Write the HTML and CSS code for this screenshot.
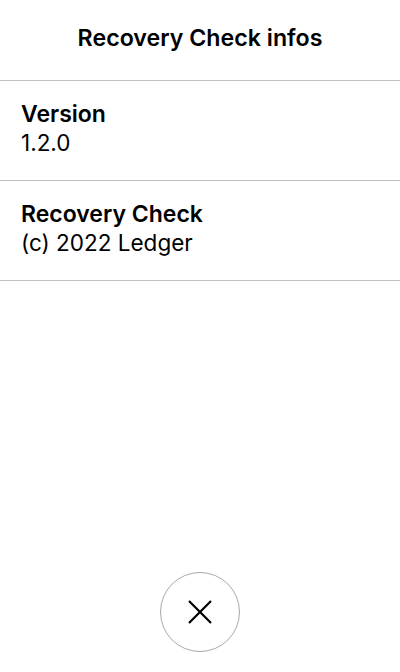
FILE: index.html
```html
<!DOCTYPE html>
<html>
<head>
<meta charset="utf-8">
<link rel="stylesheet" href="styles.css">
</head>
<body>
<div class="screen">
  <header class="title">Recovery Check infos</header>
  <div class="item">
    <div class="label">Version</div>
    <div class="value">1.2.0</div>
  </div>
  <div class="item">
    <div class="label">Recovery Check</div>
    <div class="value">(c) 2022 Ledger</div>
  </div>
  <div class="spacer"></div>
  <div class="footer">
    <button class="close" aria-label="Close">
      <svg width="24" height="24" viewBox="0 0 24 24"><path d="M1 1L23 23M23 1L1 23" stroke="#000" stroke-width="2.2" fill="none"/></svg>
    </button>
  </div>
</div>
</body>
</html>
```
FILE: styles.css
```css
html, body { margin: 0; padding: 0; background: #fff; }
.screen {
  width: 400px; height: 672px; display: flex; flex-direction: column;
  font-family: Inter, "Noto Sans", sans-serif; color: #000;
}
.title {
  height: 81px; box-sizing: border-box; border-bottom: 1px solid #c0c0c0;
  display: flex; align-items: center; justify-content: center;
  font-size: 23.2px; font-weight: 600; padding-bottom: 5px;
}
.item {
  height: 100px; box-sizing: border-box; border-bottom: 1px solid #c0c0c0;
  padding: 19px 21px 0;
}
.label { font-size: 23px; font-weight: 600; line-height: 28px; }
.value { font-size: 22.5px; font-weight: 400; line-height: 30px; }
.spacer { flex: 1; }
.footer { display: flex; justify-content: center; padding-bottom: 20px; }
.close {
  width: 80px; height: 80px; border-radius: 50%; border: 1.5px solid #aaa; background: #fff;
  display: flex; align-items: center; justify-content: center; padding: 0;
}
```
